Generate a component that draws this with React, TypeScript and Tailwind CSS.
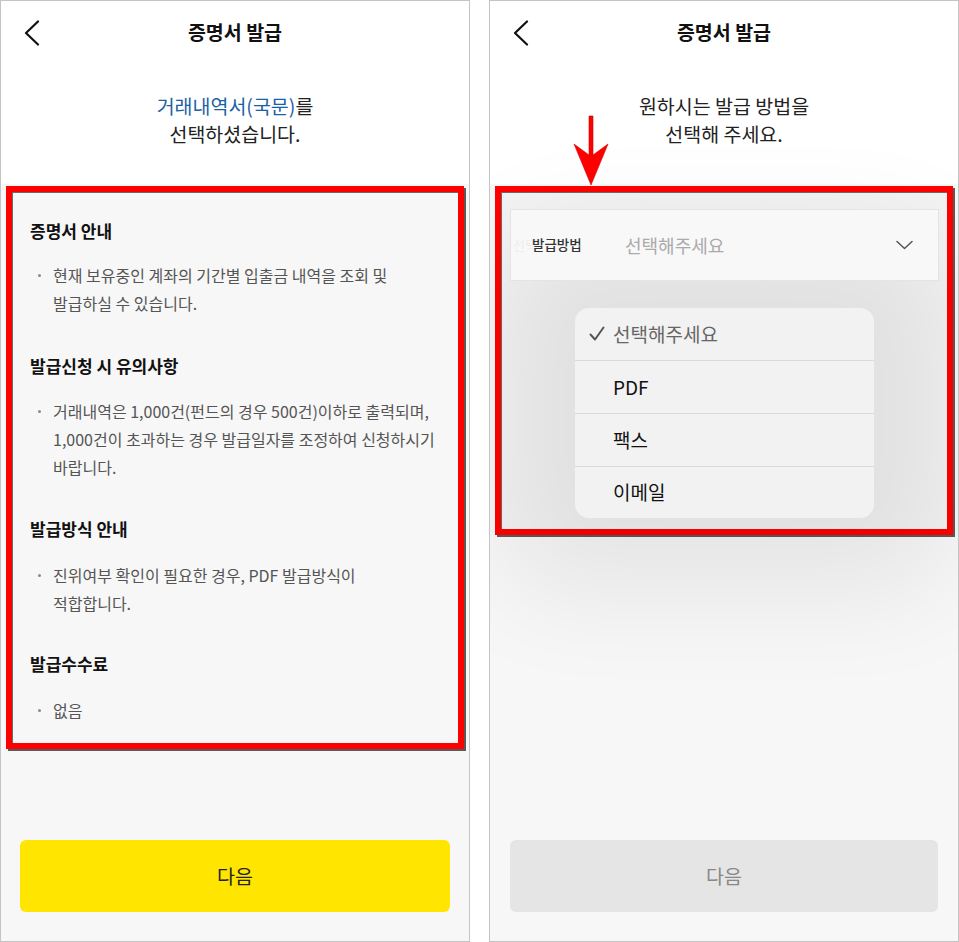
import React from "react";

function BackIcon() {
  return (
    <svg width="20" height="26" viewBox="0 0 20 26" fill="none">
      <path d="M15 1.5 L3 13 L15 24.5" stroke="#111" strokeWidth="2.2" strokeLinecap="round" strokeLinejoin="round" />
    </svg>
  );
}

function Header() {
  return (
    <div className="relative h-[62px] flex items-center justify-center bg-white">
      <div className="absolute left-[22px] top-[19px]">
        <BackIcon />
      </div>
      <div className="text-[19.5px] font-bold text-[#111] leading-[26px]">증명서 발급</div>
    </div>
  );
}

function Bullet({ lines }: { lines: string[] }) {
  return (
    <div className="flex">
      <div className="w-[23px] shrink-0 flex pt-[13px] pl-[8px]">
        <div className="w-[3px] h-[3px] rounded-full bg-[#8a8a8a]" />
      </div>
      <div className="text-[16px] leading-[28px] text-[#555]">
        {lines.map((l, i) => (
          <div key={i} className="whitespace-nowrap">{l}</div>
        ))}
      </div>
    </div>
  );
}

function Section({ title, lines, mt, gap }: { title: string; lines: string[]; mt: string; gap: string }) {
  return (
    <div className={mt}>
      <div className="text-[17px] font-bold leading-[24px] text-[#111]">{title}</div>
      <div className={gap}>
        <Bullet lines={lines} />
      </div>
    </div>
  );
}

function LeftPhone() {
  return (
    <div className="w-[470px] h-[942px] border border-[#c4c4c4] flex flex-col bg-white overflow-hidden">
      <Header />
      <div className="mt-[29px] text-center text-[19.5px] leading-[28px] text-[#222]">
        <div>
          <span className="text-[#1b61a6]">거래내역서(국문)</span>를
        </div>
        <div>선택하셨습니다.</div>
      </div>
      <div className="mt-[36px] flex-1 bg-[#f7f7f7] flex flex-col px-[5px] pt-[2px]">
        <div className="border-[6px] border-[#ff0000] shadow-[2px_2px_0_#5a5a5a,inset_1px_1px_0_#6a6a6a] bg-[#f7f7f7] pl-[18px] pt-[27px] pb-[19px]">
          <Section title="증명서 안내" mt="" gap="mt-[18px]" lines={["현재 보유중인 계좌의 기간별 입출금 내역을 조회 및", "발급하실 수 있습니다."]} />
          <Section
            title="발급신청 시 유의사항"
            mt="mt-[37px]"
            gap="mt-[19px]"
            lines={["거래내역은 1,000건(펀드의 경우 500건)이하로 출력되며,", "1,000건이 초과하는 경우 발급일자를 조정하여 신청하시기", "바랍니다."]}
          />
          <Section title="발급방식 안내" mt="mt-[36px]" gap="mt-[20px]" lines={["진위여부 확인이 필요한 경우, PDF 발급방식이", "적합합니다."]} />
          <Section title="발급수수료" mt="mt-[35px]" gap="mt-[20px]" lines={["없음"]} />
        </div>
        <div className="mt-auto mb-[29px] mx-[14px] h-[72px] rounded-[6px] bg-[#ffe500] flex items-center justify-center text-[19.5px] text-[#222]">
          다음
        </div>
      </div>
    </div>
  );
}

function RightPhone() {
  return (
    <div className="relative w-[470px] h-[942px] border border-[#c4c4c4] flex flex-col bg-white overflow-hidden">
      <Header />
      <div className="mt-[29px] text-center text-[19.5px] leading-[28px] text-[#222]">
        <div>원하시는 발급 방법을</div>
        <div>선택해 주세요.</div>
      </div>
      <div className="mt-[36px] flex-1 bg-[#f7f7f7] flex flex-col px-[5px] pt-[2px]">
        <div className="relative border-[6px] border-[#ff0000] shadow-[2px_2px_0_#5a5a5a,inset_1px_1px_0_#6a6a6a] bg-[#f3f3f3] pt-[17px] pb-[11px] pl-[9px] pr-[8px]">
          <div className="relative h-[72px] border border-[#e4e4e4] bg-[#f8f8f8] flex items-center pl-[21px] pr-[25px]">
            <span className="absolute left-[2px] text-[13px] text-[#eeeeee]">선택</span>
            <span className="relative w-[93px] shrink-0 text-[13.5px] font-medium text-[#333] leading-[18px] -mt-[2px]">발급방법</span>
            <span className="flex-1 text-[18px] text-[#aaa]">선택해주세요</span>
            <svg width="17" height="10" viewBox="0 0 17 10" fill="none">
              <path d="M1 1.5 L8.5 8.5 L16 1.5" stroke="#555" strokeWidth="1.5" strokeLinecap="round" strokeLinejoin="round" />
            </svg>
          </div>
          <div className="mt-[27px] mx-auto w-[299px] rounded-[14px] bg-[#f2f2f2] shadow-[0_0_110px_75px_rgba(0,0,0,0.075)] flex flex-col">
            <div className="h-[52px] flex items-center pl-[14px] text-[19px] text-[#666]">
              <svg width="16" height="16" viewBox="0 0 16 16" fill="none" className="mr-[8px]">
                <path d="M1.5 8.5 L6 13.5 L14.5 1.5" stroke="#555" strokeWidth="2" strokeLinecap="round" strokeLinejoin="round" />
              </svg>
              선택해주세요
            </div>
            <div className="h-px bg-[#d9d9d9]" />
            <div className="h-[52px] flex items-center pl-[38px] text-[19px] text-[#111]">PDF</div>
            <div className="h-px bg-[#d9d9d9]" />
            <div className="h-[52px] flex items-center pl-[38px] text-[19px] text-[#111]">팩스</div>
            <div className="h-px bg-[#d9d9d9]" />
            <div className="h-[51px] flex items-center pl-[38px] text-[19px] text-[#111]">이메일</div>
          </div>
        </div>
        <div className="mt-auto mb-[29px] mx-[15px] h-[72px] rounded-[6px] bg-[#e5e5e5] flex items-center justify-center text-[19.5px] text-[#888]">
          다음
        </div>
      </div>
      <svg className="absolute left-[83px] top-[114px]" width="36" height="71" viewBox="0 0 36 71" fill="none">
        <polygon points="16,1 20,1 20,40 35,29 18,70 1,29 16,40" fill="#ff0000" stroke="#d00000" strokeWidth="0.6" />
      </svg>
    </div>
  );
}

export default function App() {
  return (
    <div className="w-[959px] h-[942px] bg-white flex gap-[19px] font-['Noto_Sans_CJK_KR','Noto_Sans',sans-serif]">
      <LeftPhone />
      <RightPhone />
    </div>
  );
}
